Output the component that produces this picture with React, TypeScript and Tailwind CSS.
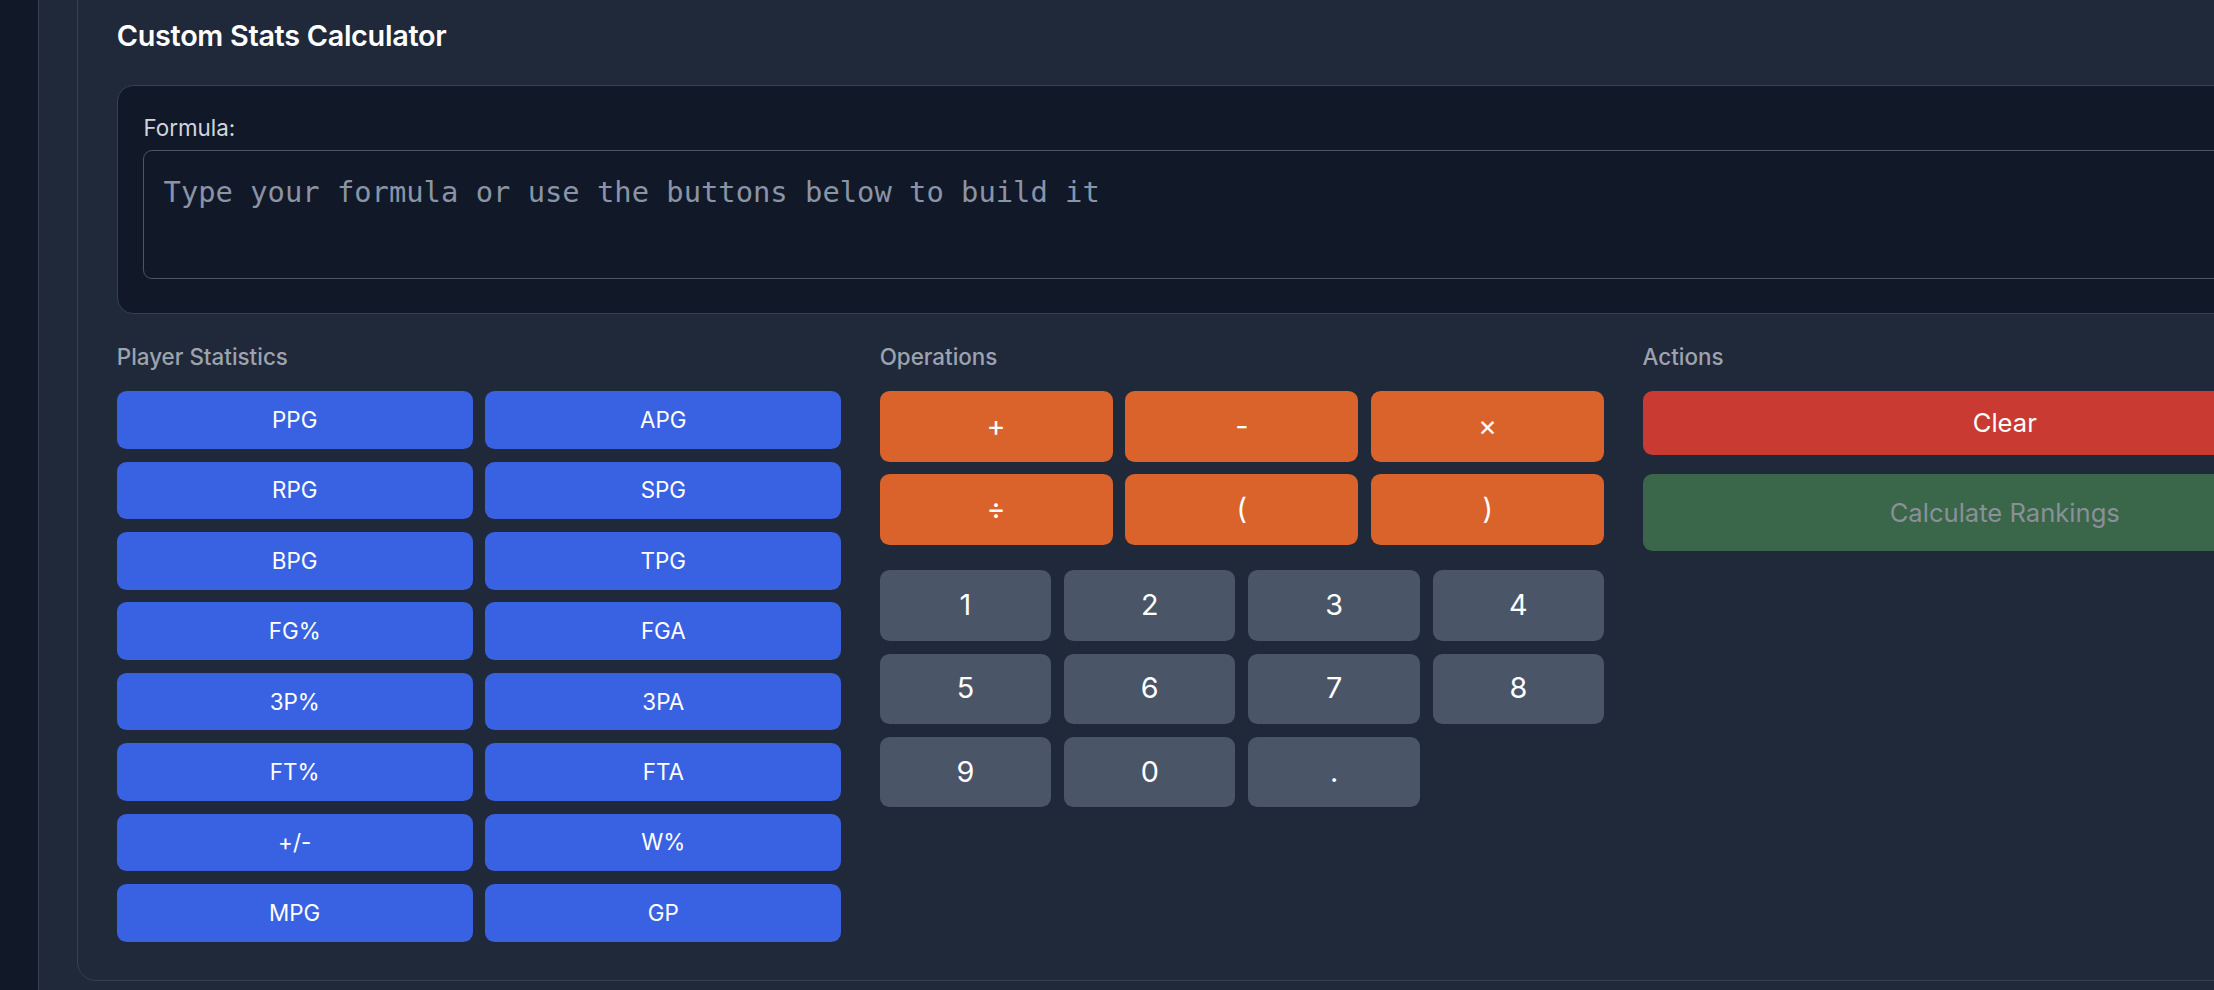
import React from 'react';

const STATS = [
  'PPG', 'APG',
  'RPG', 'SPG',
  'BPG', 'TPG',
  'FG%', 'FGA',
  '3P%', '3PA',
  'FT%', 'FTA',
  '+/-', 'W%',
  'MPG', 'GP',
];

const OPERATIONS = ['+', '-', '×', '÷', '(', ')'];

const DIGITS = ['1', '2', '3', '4', '5', '6', '7', '8', '9', '0', '.'];

function SectionLabel({ children }: { children: React.ReactNode }) {
  return (
    <h4 className="mb-[19.2px] pt-[1px] text-[22.4px] leading-[31px] font-medium text-[#9ca3af]">
      {children}
    </h4>
  );
}

export default function App() {
  return (
    <div className="flex h-screen w-screen overflow-hidden bg-[#111827] font-['Inter','Liberation_Sans',sans-serif]">
      {/* Sidebar strip */}
      <div className="w-[38px] shrink-0 bg-[#111827]" />

      <main className="shrink-0 border-l border-[#374151] bg-[#20293a] pl-[38.4px]">
        <section className="-mt-[25px] w-[2329px] rounded-[19px] border border-[#374151] bg-[#20293a] p-[38.4px]">
          <h2 className="mb-[25.6px] text-[28.8px] leading-[44.8px] font-semibold tracking-[-0.3px] text-white">
            Custom Stats Calculator
          </h2>

          {/* Formula input */}
          <div className="rounded-[16px] border border-[#374151] bg-[#111827] px-[25.6px] pt-[25.6px] pb-[34.7px]">
            <label className="mb-[6.4px] block pt-[1px] text-[22.4px] leading-[31px] text-[#d1d5db]">
              Formula:
            </label>
            <textarea
              rows={2}
              placeholder="Type your formula or use the buttons below to build it"
              className="block h-[129px] w-full resize-none rounded-[9px] border border-[#4b5563] bg-[#111827] p-[19.2px] font-['DejaVu_Sans_Mono',monospace] text-[28.8px] leading-[44.8px] text-white placeholder:text-[#8a94a6] focus:outline-none"
            />
          </div>

          <div className="mt-[25.6px] grid grid-cols-3 gap-[38.4px]">
            {/* Player statistics */}
            <div>
              <SectionLabel>Player Statistics</SectionLabel>
              <div className="grid grid-cols-2 gap-[12.8px]">
                {STATS.map((s) => (
                  <button
                    key={s}
                    type="button"
                    className="rounded-[9.6px] bg-[#3962e3] py-[12.8px] text-[22.4px] leading-[32px] text-white"
                  >
                    {s}
                  </button>
                ))}
              </div>
            </div>

            {/* Operations + number pad */}
            <div>
              <SectionLabel>Operations</SectionLabel>
              <div className="grid grid-cols-3 gap-[12.8px]">
                {OPERATIONS.map((op) => (
                  <button
                    key={op}
                    type="button"
                    className="rounded-[9.6px] bg-[#d9632b] py-[12.8px] text-[28.8px] leading-[44.8px] text-white"
                  >
                    {op}
                  </button>
                ))}
              </div>
              <div className="mt-[25.6px] grid grid-cols-4 gap-[12.8px]">
                {DIGITS.map((d) => (
                  <button
                    key={d}
                    type="button"
                    className="rounded-[9.6px] bg-[#4a5568] py-[12.8px] text-[28.8px] leading-[44.8px] text-white"
                  >
                    {d}
                  </button>
                ))}
              </div>
            </div>

            {/* Actions */}
            <div>
              <SectionLabel>Actions</SectionLabel>
              <div className="flex flex-col gap-[19.2px]">
                <button
                  type="button"
                  className="rounded-[9.6px] bg-[#c93a32] py-[12.8px] text-[25.6px] leading-[38.4px] text-white"
                >
                  Clear
                </button>
                <button
                  type="button"
                  disabled
                  className="rounded-[9.6px] bg-[#3a6749] py-[19.2px] text-[25.6px] leading-[38.4px] text-[#8b9098]"
                >
                  Calculate Rankings
                </button>
              </div>
            </div>
          </div>
        </section>
      </main>
    </div>
  );
}
